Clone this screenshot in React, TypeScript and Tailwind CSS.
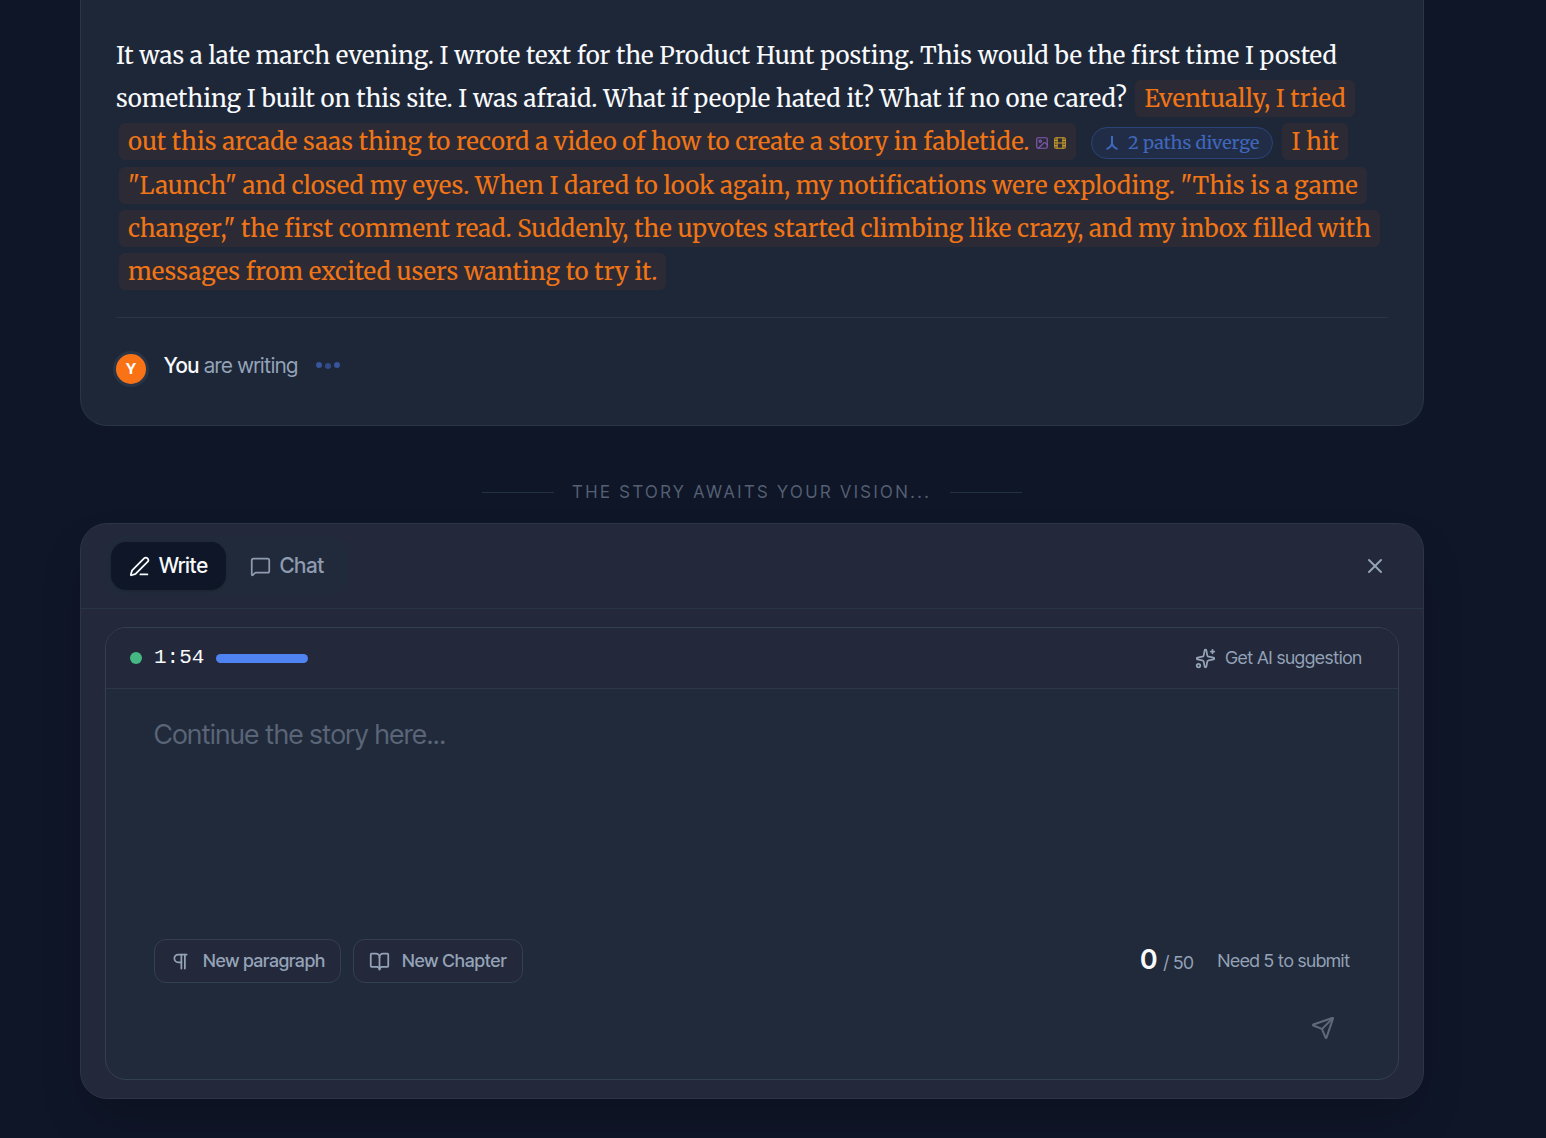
import type { ReactNode } from "react";
import { BookOpen, Film, Image, MessageSquare, PenLine, Pilcrow, Send, Sparkles, X } from "lucide-react";

function Passage({ children }: { children: ReactNode }) {
  return (
    <span className="mx-[3px] rounded-md bg-[#2c2b35] box-decoration-clone px-[9px] py-[3px] text-[#f17515]">
      {children}
    </span>
  );
}

function PathsIcon() {
  return (
    <svg width="14" height="16" viewBox="0 0 14 16" fill="none" stroke="currentColor" strokeWidth="2">
      <path d="M7 1v7M7 8c0 2-2 5-5.5 6M7 8c0 2 2 5 5.5 6" />
    </svg>
  );
}

function StoryCard() {
  return (
    <section className="rounded-b-[27px] border border-t-0 border-[#2a3547] bg-[#1e2738] px-[35px] pt-[34px] pb-[41px]">
      <p className="font-['Merriweather','DejaVu_Serif_Condensed','DejaVu_Serif',serif] text-[24px] leading-[43px] text-[#f8fafc]">
        It was a late march evening. I wrote text for the Product Hunt posting. This would be the first time I posted
        something I built on this site. I was afraid. What if people hated it? What if no one cared?{" "}
        <Passage>
          Eventually, I tried out this arcade saas thing to record a video of how to create a story in fabletide.
          <span className="ml-1.5 inline-flex gap-1 align-middle">
            <Image size={14} className="text-[#8059b5]" />
            <Film size={14} className="text-[#c79a2b]" />
          </span>
        </Passage>{" "}
        <button
          type="button"
          className="mx-1.5 my-[5px] inline-flex h-8 items-center gap-[9px] rounded-full border border-[#2b4377] bg-[#212d47] px-[13px] align-middle text-[18px] leading-6 text-[#4068bd]"
        >
          <PathsIcon />2 paths diverge
        </button>
        <Passage>
          I hit "Launch" and closed my eyes. When I dared to look again, my notifications were exploding. "This is a
          game changer," the first comment read. Suddenly, the upvotes started climbing like crazy, and my inbox filled
          with messages from excited users wanting to try it.
        </Passage>
      </p>

      <div className="mt-6 flex items-start gap-[18px] border-t border-[#2a3547] pt-9">
        <span className="flex size-[30px] items-center justify-center rounded-full bg-[#f97316] text-[15px] font-bold text-white ring-3 ring-[#293446]">
          Y
        </span>
        <p className="text-[21px] leading-6 text-[#94a3b8]">
          <span className="font-medium text-[#f8fafc]">You</span> are writing
        </p>
        <span className="flex gap-[3px] pt-2">
          <i className="size-1.5 rounded-full bg-[#38549a]" />
          <i className="mt-px size-1.5 rounded-full bg-[#314b88]" />
          <i className="size-1.5 rounded-full bg-[#38549a]" />
        </span>
      </div>
    </section>
  );
}

function Composer() {
  return (
    <section className="rounded-[27px] border border-[#2a3547] bg-[#23283a] shadow-[0_24px_48px_-12px_rgba(0,0,0,0.25)]">
      <header className="flex items-center justify-between border-b border-[#283344] px-6 py-3">
        <div className="flex gap-1.5 rounded-[18px] bg-[#212a3a] p-1.5">
          <button
            type="button"
            className="flex h-12 items-center gap-[9px] rounded-[15px] bg-[#0f1628] px-[18px] text-[21px] leading-6 font-medium text-[#f8fafc] shadow-sm"
          >
            <PenLine size={21} strokeWidth={2} />
            Write
          </button>
          <button
            type="button"
            className="flex h-12 items-center gap-[9px] rounded-[15px] px-[18px] text-[21px] leading-6 font-medium text-[#8f9bb0]"
          >
            <MessageSquare size={21} strokeWidth={2} />
            Chat
          </button>
        </div>
        <button type="button" aria-label="Close" className="p-3 text-[#94a3b8]">
          <X size={24} strokeWidth={2} />
        </button>
      </header>

      <div className="px-6 py-[18px]">
        <div className="overflow-hidden rounded-[21px] border border-[#334052] bg-[#212a3a]">
          <div className="flex h-[61px] items-center justify-between border-b border-[#2c384a] bg-[#23283a] px-6">
            <div className="flex items-center gap-3">
              <span className="size-3 rounded-full bg-[#45b884]" />
              <span className="font-['SF_Mono','Liberation_Mono',monospace] text-[21px] leading-8 font-medium text-[#f8fafc]">
                1:54
              </span>
              <span className="h-[9px] w-23 rounded-full bg-[#4f83f1]" />
            </div>
            <button type="button" className="flex items-center gap-[9px] px-3 text-[18px] leading-6 text-[#94a3b8]">
              <Sparkles size={21} strokeWidth={2} />
              Get AI suggestion
            </button>
          </div>

          <div className="px-12 pt-6 pb-6">
            <textarea
              aria-label="Continue the story"
              placeholder="Continue the story here..."
              className="block h-[226px] w-full resize-none bg-transparent text-[27px] leading-11 text-[#f8fafc] outline-none placeholder:text-[#5a6578]"
            />
            <div className="flex items-center justify-between">
              <div className="flex gap-3">
                <button
                  type="button"
                  className="flex h-11 items-center gap-3 rounded-xl border border-[#334052] bg-[#23283a] px-[15px] text-[18px] leading-6 font-medium text-[#94a3b8]"
                >
                  <Pilcrow size={21} strokeWidth={2} />
                  New paragraph
                </button>
                <button
                  type="button"
                  className="flex h-11 items-center gap-3 rounded-xl border border-[#334052] bg-[#23283a] px-[15px] text-[18px] leading-6 font-medium text-[#94a3b8]"
                >
                  <BookOpen size={21} strokeWidth={2} />
                  New Chapter
                </button>
              </div>
              <div className="flex items-center gap-6 text-[18px] leading-6 text-[#94a3b8]">
                <p className="flex items-baseline gap-1.5">
                  <span className="text-[27px] font-semibold text-[#f8fafc]">0</span>
                  <span>/ 50</span>
                </p>
                <p>Need 5 to submit</p>
              </div>
            </div>
            <div className="mt-[18px] flex justify-end">
              <button type="button" aria-label="Submit" className="p-[15px] text-[#5f697b]">
                <Send size={24} strokeWidth={2} />
              </button>
            </div>
          </div>
        </div>
      </div>
    </section>
  );
}

export default function App() {
  return (
    <main className="min-h-screen bg-[#0f1628] pr-[122px] pb-9 pl-20 font-['Inter_Tight','Inter',sans-serif]">
      <StoryCard />
      <div className="flex items-center justify-center gap-[18px] pt-[54px] pb-[19px]">
        <span className="h-px w-18 bg-[#233042]" />
        <p className="text-[17px] leading-6 tracking-[3px] text-[#556073] uppercase">The story awaits your vision...</p>
        <span className="h-px w-18 bg-[#233042]" />
      </div>
      <Composer />
    </main>
  );
}
